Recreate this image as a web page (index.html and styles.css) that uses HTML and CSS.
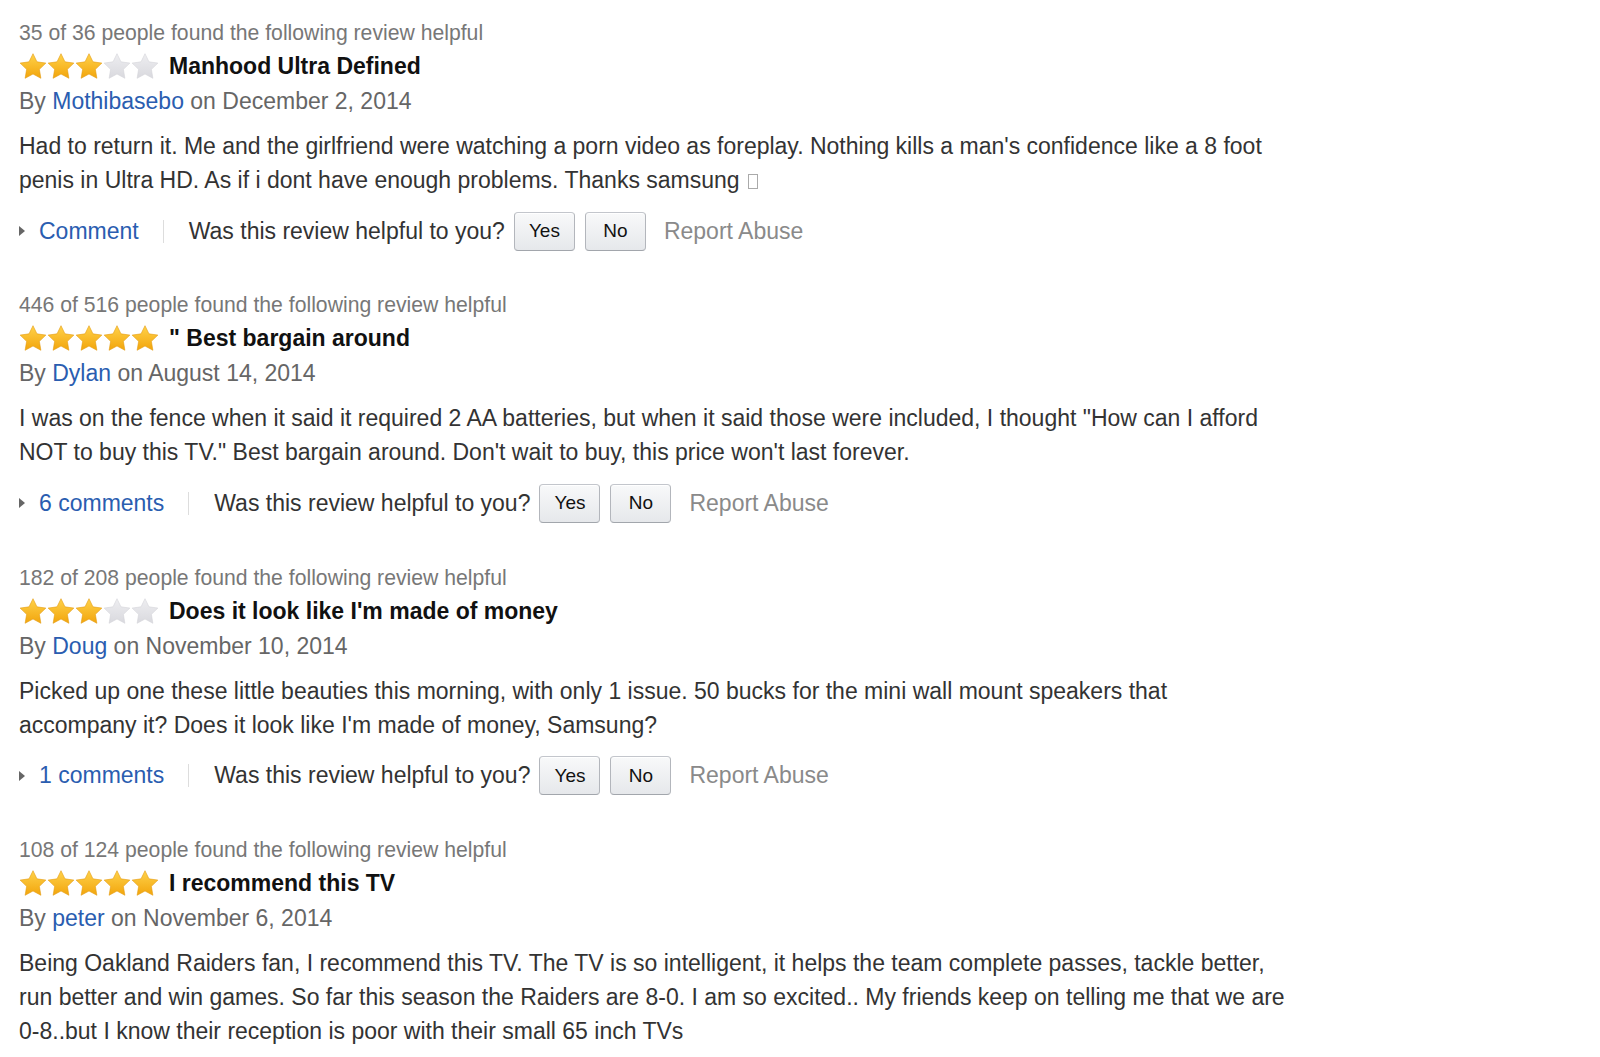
FILE: index.html
```html
<!DOCTYPE html>
<html lang="en">
<head>
<meta charset="utf-8">
<title>Customer Reviews</title>
<link rel="stylesheet" href="styles.css">
</head>
<body>
<svg class="defs" width="0" height="0" aria-hidden="true">
  <defs>
    <linearGradient id="gold" x1="0" y1="0" x2="0" y2="1">
      <stop offset="0" stop-color="#ffd24a"/>
      <stop offset="1" stop-color="#f2a50c"/>
    </linearGradient>
    <linearGradient id="grey" x1="0" y1="0" x2="0" y2="1">
      <stop offset="0" stop-color="#eeeef1"/>
      <stop offset="1" stop-color="#d9d9de"/>
    </linearGradient>
    <path id="star" d="M12 0.6l3.4 7 7.7 1.1-5.6 5.4 1.3 7.7L12 18.1l-6.8 3.7 1.3-7.7L0.9 8.7l7.7-1.1z"/>
  </defs>
</svg>

<div class="review">
  <div class="helpful">35 of 36 people found the following review helpful</div>
  <div class="title-row">
    <div class="stars">
      <svg viewBox="0 0 24 22.4"><use href="#star" class="on"/></svg>
      <svg viewBox="0 0 24 22.4"><use href="#star" class="on"/></svg>
      <svg viewBox="0 0 24 22.4"><use href="#star" class="on"/></svg>
      <svg viewBox="0 0 24 22.4"><use href="#star" class="off"/></svg>
      <svg viewBox="0 0 24 22.4"><use href="#star" class="off"/></svg>
    </div>
    <span class="title">Manhood Ultra Defined</span>
  </div>
  <div class="byline">By <a href="#">Mothibasebo</a> on December 2, 2014</div>
  <p class="text">Had to return it. Me and the girlfriend were watching a porn video as foreplay. Nothing kills a man's confidence like a 8 foot<br>penis in Ultra HD. As if i dont have enough problems. Thanks samsung <span class="tofu"></span></p>
  <div class="actions">
    <span class="caret"></span>
    <a class="comments" href="#">Comment</a>
    <span class="sep"></span>
    <span class="question">Was this review helpful to you?</span>
    <button class="btn">Yes</button>
    <button class="btn">No</button>
    <span class="report">Report Abuse</span>
  </div>
</div>

<div class="review">
  <div class="helpful">446 of 516 people found the following review helpful</div>
  <div class="title-row">
    <div class="stars">
      <svg viewBox="0 0 24 22.4"><use href="#star" class="on"/></svg>
      <svg viewBox="0 0 24 22.4"><use href="#star" class="on"/></svg>
      <svg viewBox="0 0 24 22.4"><use href="#star" class="on"/></svg>
      <svg viewBox="0 0 24 22.4"><use href="#star" class="on"/></svg>
      <svg viewBox="0 0 24 22.4"><use href="#star" class="on"/></svg>
    </div>
    <span class="title">" Best bargain around</span>
  </div>
  <div class="byline">By <a href="#">Dylan</a> on August 14, 2014</div>
  <p class="text">I was on the fence when it said it required 2 AA batteries, but when it said those were included, I thought "How can I afford<br>NOT to buy this TV." Best bargain around. Don't wait to buy, this price won't last forever.</p>
  <div class="actions">
    <span class="caret"></span>
    <a class="comments" href="#">6 comments</a>
    <span class="sep"></span>
    <span class="question">Was this review helpful to you?</span>
    <button class="btn">Yes</button>
    <button class="btn">No</button>
    <span class="report">Report Abuse</span>
  </div>
</div>

<div class="review">
  <div class="helpful">182 of 208 people found the following review helpful</div>
  <div class="title-row">
    <div class="stars">
      <svg viewBox="0 0 24 22.4"><use href="#star" class="on"/></svg>
      <svg viewBox="0 0 24 22.4"><use href="#star" class="on"/></svg>
      <svg viewBox="0 0 24 22.4"><use href="#star" class="on"/></svg>
      <svg viewBox="0 0 24 22.4"><use href="#star" class="off"/></svg>
      <svg viewBox="0 0 24 22.4"><use href="#star" class="off"/></svg>
    </div>
    <span class="title">Does it look like I'm made of money</span>
  </div>
  <div class="byline">By <a href="#">Doug</a> on November 10, 2014</div>
  <p class="text">Picked up one these little beauties this morning, with only 1 issue. 50 bucks for the mini wall mount speakers that<br>accompany it? Does it look like I'm made of money, Samsung?</p>
  <div class="actions">
    <span class="caret"></span>
    <a class="comments" href="#">1 comments</a>
    <span class="sep"></span>
    <span class="question">Was this review helpful to you?</span>
    <button class="btn">Yes</button>
    <button class="btn">No</button>
    <span class="report">Report Abuse</span>
  </div>
</div>

<div class="review">
  <div class="helpful">108 of 124 people found the following review helpful</div>
  <div class="title-row">
    <div class="stars">
      <svg viewBox="0 0 24 22.4"><use href="#star" class="on"/></svg>
      <svg viewBox="0 0 24 22.4"><use href="#star" class="on"/></svg>
      <svg viewBox="0 0 24 22.4"><use href="#star" class="on"/></svg>
      <svg viewBox="0 0 24 22.4"><use href="#star" class="on"/></svg>
      <svg viewBox="0 0 24 22.4"><use href="#star" class="on"/></svg>
    </div>
    <span class="title">I recommend this TV</span>
  </div>
  <div class="byline">By <a href="#">peter</a> on November 6, 2014</div>
  <p class="text">Being Oakland Raiders fan, I recommend this TV. The TV is so intelligent, it helps the team complete passes, tackle better,<br>run better and win games. So far this season the Raiders are 8-0. I am so excited.. My friends keep on telling me that we are<br>0-8..but I know their reception is poor with their small 65 inch TVs</p>
</div>
</body>
</html>
```

FILE: styles.css
```css
html, body {
  margin: 0;
  background: #ffffff;
}

body {
  padding: 18px 0 0 19px;
  font-family: "Liberation Sans", Arial, Helvetica, sans-serif;
  color: #333333;
  overflow: hidden;
}

.defs {
  position: absolute;
  width: 0;
  height: 0;
}

.review {
  margin-bottom: 39.4px;
}

.helpful {
  font-size: 21.2px;
  line-height: 30px;
  color: #777777;
}

.title-row {
  display: flex;
  align-items: center;
  height: 34px;
  margin-top: 1px;
  margin-bottom: -1px;
}

.stars {
  display: flex;
  gap: 0;
  margin-right: 10px;
}

.stars svg {
  display: block;
  width: 28px;
  height: 26px;
}

.on {
  fill: url(#gold);
  stroke: #e49a10;
  stroke-width: 0.5;
}

.off {
  fill: url(#grey);
  stroke: #d3d3d8;
  stroke-width: 0.5;
}

.title {
  font-size: 23px;
  line-height: 34px;
  font-weight: bold;
  color: #111111;
}

.byline {
  font-size: 23px;
  line-height: 38px;
  color: #666666;
}

.byline a,
.comments {
  color: #2a5db0;
  text-decoration: none;
}

.text {
  margin: 9px 0 0;
  font-size: 23px;
  line-height: 34px;
  color: #333333;
  white-space: nowrap;
}

.tofu {
  display: inline-block;
  width: 10px;
  height: 15px;
  border: 1px solid #aaaaaa;
  box-sizing: border-box;
  margin-left: 2px;
  vertical-align: -1px;
}

.actions {
  display: flex;
  align-items: center;
  height: 40px;
  margin-top: 14px;
  font-size: 23px;
}

.caret {
  width: 0;
  height: 0;
  border-top: 5px solid transparent;
  border-bottom: 5px solid transparent;
  border-left: 6px solid #666666;
  margin-right: 14px;
}

.sep {
  width: 1px;
  height: 23px;
  background: #dddddd;
  margin: 0 25px 0 24px;
}

.question {
  color: #333333;
  margin-right: 9px;
}

.btn {
  box-sizing: border-box;
  min-width: 61px;
  height: 39px;
  padding: 0 13px;
  margin-right: 10px;
  border: 1px solid #adb1b8;
  border-color: #c3c6cc #b3b6bc #a2a6ac;
  border-radius: 4px;
  background: linear-gradient(#f8f9fa, #e6e8eb);
  box-shadow: inset 0 1px 0 #ffffff;
  font-family: "Liberation Sans", Arial, Helvetica, sans-serif;
  font-size: 19px;
  color: #111111;
}

.report {
  margin-left: 8px;
  color: #8a8a8a;
}
```
